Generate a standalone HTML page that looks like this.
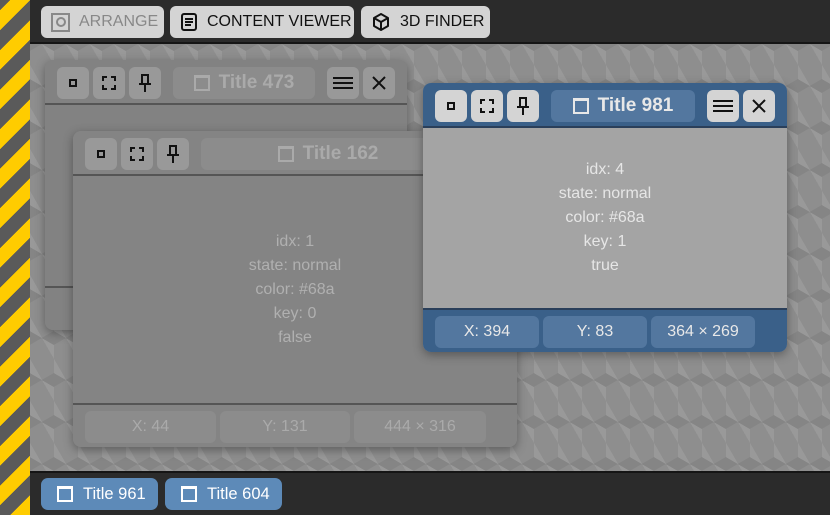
<!DOCTYPE html><html><head><style>
*{box-sizing:border-box;margin:0;padding:0}
body{width:830px;height:515px;overflow:hidden;position:relative;font-family:"Liberation Sans",sans-serif;background:#8c8c8c}
.stripe{position:absolute;left:0;top:0;width:30px;height:515px;background:repeating-linear-gradient(-45deg,#ffcc00 0 14px,#5a5a5a 14px 28px)}
.bg{position:absolute;left:30px;top:44px;right:0;bottom:44px;background-color:#8e8e8e;background-image:linear-gradient(30deg,#858585 12%,transparent 12.5%,transparent 87%,#858585 87.5%),linear-gradient(150deg,#858585 12%,transparent 12.5%,transparent 87%,#858585 87.5%),linear-gradient(60deg,#999 25%,transparent 25.5%,transparent 75%,#999 75%);background-size:24px 42px}
.top{position:absolute;left:30px;top:0;right:0;height:44px;background:#2b2b2b;border-bottom:2px solid #151515}
.bot{position:absolute;left:30px;bottom:0;right:0;height:44px;background:#2b2b2b;border-top:2px solid #151515}
.tb{position:absolute;top:6px;height:32px;background:#d4d4d4;border-radius:6px;font-size:16px;color:#111;display:flex;align-items:center;padding-left:10px;gap:9px;white-space:nowrap}
.win{position:absolute;border-radius:8px;box-shadow:0 3px 10px rgba(0,0,0,.35);overflow:hidden}
.hd{position:absolute;left:0;right:0;top:0;height:45px;border-bottom:2px solid #555}
.b{position:absolute;top:7px;width:32px;height:32px;border-radius:6px;display:flex;align-items:center;justify-content:center}
.title{position:absolute;top:7px;height:32px;border-radius:6px;display:flex;align-items:center;justify-content:center;gap:9px;font-weight:bold;font-size:19px;white-space:nowrap}
.body{position:absolute;left:0;right:0;top:45px;text-align:center;font-size:16px;line-height:24px}
.ft{position:absolute;left:0;right:0;bottom:0;height:44px;border-top:2px solid #555}
.p{position:absolute;top:6px;height:32px;border-radius:6px;display:flex;align-items:center;justify-content:center;font-size:16px}
.task{position:absolute;top:478px;height:32px;background:#5d8ab8;border-radius:7px;color:#fff;font-size:16.5px;display:flex;align-items:center;padding-left:16px;gap:10px;white-space:nowrap}
.sq{width:16px;height:16px;border:2px solid currentColor;border-top-width:3px}
</style></head><body>
<div class="stripe"></div><div class="bg"></div>
<div class="top">
<div class="tb" style="left:11px;width:123px;color:#888"><span style="width:19px;height:19px;border:2px solid #888;display:flex;align-items:center;justify-content:center"><span style="width:10px;height:10px;border:2px solid #888;border-radius:50%"></span></span>ARRANGE</div>
<div class="tb" style="left:140px;width:184px"><svg width="18" height="18" viewBox="0 0 18 18"><rect x="2" y="1" width="14" height="16" rx="2" fill="none" stroke="#111" stroke-width="2"/><path d="M5 6h8M5 9h8M5 12h6" stroke="#111" stroke-width="2"/></svg>CONTENT VIEWER</div>
<div class="tb" style="left:331px;width:129px"><svg width="20" height="20" viewBox="0 0 20 20"><path d="M10 2l7 4v8l-7 4-7-4V6z M3 6l7 4 7-4 M10 10v8" fill="none" stroke="#111" stroke-width="2" stroke-linejoin="round"/></svg>3D FINDER</div>
</div>
<div class="bot"></div>
<div class="task" style="left:41px;width:117px"><span class="sq"></span>Title 961</div>
<div class="task" style="left:165px;width:117px"><span class="sq"></span>Title 604</div>

<!-- win 473 -->
<div class="win" style="left:45px;top:60px;width:362px;height:270px;background:#828282">
<div class="hd" style="background:#828282"></div>
<div class="b" style="left:12px;background:#999"><span style="width:8px;height:8px;border:2px solid #111"></span></div>
<div class="b" style="left:48px;background:#999"><svg width="14" height="14"><path d="M1 5V1h4M9 1h4v4M13 9v4H9M5 13H1V9" fill="none" stroke="#111" stroke-width="2"/></svg></div>
<div class="b" style="left:84px;background:#999"><svg width="14" height="18"><path d="M3 1h8M4 1v8M10 1v8M1 10h12M7 10v8" fill="none" stroke="#111" stroke-width="2"/></svg></div>
<div class="title" style="left:128px;width:142px;background:#8c8c8c;color:#aaa"><span class="sq" style="color:#aaa"></span>Title 473</div>
<div class="b" style="left:282px;background:#999"><svg width="20" height="14"><path d="M0 2h20M0 7h20M0 12h20" stroke="#111" stroke-width="2"/></svg></div>
<div class="b" style="left:318px;background:#999"><svg width="16" height="16"><path d="M2 2l12 12M14 2L2 14" stroke="#111" stroke-width="2"/></svg></div>
<div class="ft" style="background:#828282"></div>
</div>

<!-- win 162 -->
<div class="win" style="left:73px;top:131px;width:444px;height:316px;background:#848484">
<div class="hd" style="background:#848484"></div>
<div class="b" style="left:12px;background:#999"><span style="width:8px;height:8px;border:2px solid #111"></span></div>
<div class="b" style="left:48px;background:#999"><svg width="14" height="14"><path d="M1 5V1h4M9 1h4v4M13 9v4H9M5 13H1V9" fill="none" stroke="#111" stroke-width="2"/></svg></div>
<div class="b" style="left:84px;background:#999"><svg width="14" height="18"><path d="M3 1h8M4 1v8M10 1v8M1 10h12M7 10v8" fill="none" stroke="#111" stroke-width="2"/></svg></div>
<div class="title" style="left:128px;width:254px;background:#8c8c8c;color:#aaa"><span class="sq" style="color:#aaa"></span>Title 162</div>
<div class="body" style="color:#b0b0b0;padding-top:54px">idx: 1<br>state: normal<br>color: #68a<br>key: 0<br>false</div>
<div class="ft" style="background:#848484">
<div class="p" style="left:12px;width:131px;background:#8c8c8c;color:#aaa">X: 44</div>
<div class="p" style="left:147px;width:130px;background:#8c8c8c;color:#aaa">Y: 131</div>
<div class="p" style="left:281px;width:132px;background:#8c8c8c;color:#aaa">444 × 316</div>
</div>
</div>

<!-- win 981 -->
<div class="win" style="left:423px;top:83px;width:364px;height:269px;background:#a4a4a4">
<div class="hd" style="background:#3a6089;border-bottom-color:#2a3f5a"></div>
<div class="b" style="left:12px;background:#d4d4d4"><span style="width:8px;height:8px;border:2px solid #111"></span></div>
<div class="b" style="left:48px;background:#d4d4d4"><svg width="14" height="14"><path d="M1 5V1h4M9 1h4v4M13 9v4H9M5 13H1V9" fill="none" stroke="#111" stroke-width="2"/></svg></div>
<div class="b" style="left:84px;background:#d4d4d4"><svg width="14" height="18"><path d="M3 1h8M4 1v8M10 1v8M1 10h12M7 10v8" fill="none" stroke="#111" stroke-width="2"/></svg></div>
<div class="title" style="left:128px;width:144px;background:#53779f;color:#e8e8e8"><span class="sq" style="color:#e8e8e8"></span>Title 981</div>
<div class="b" style="left:284px;background:#d4d4d4"><svg width="20" height="14"><path d="M0 2h20M0 7h20M0 12h20" stroke="#111" stroke-width="2"/></svg></div>
<div class="b" style="left:320px;background:#d4d4d4"><svg width="16" height="16"><path d="M2 2l12 12M14 2L2 14" stroke="#111" stroke-width="2"/></svg></div>
<div class="body" style="color:#e6e6e6;padding-top:30px">idx: 4<br>state: normal<br>color: #68a<br>key: 1<br>true</div>
<div class="ft" style="background:#3a6089;border-top-color:#2a3f5a">
<div class="p" style="left:12px;width:104px;background:#53779f;color:#e8e8e8">X: 394</div>
<div class="p" style="left:120px;width:104px;background:#53779f;color:#e8e8e8">Y: 83</div>
<div class="p" style="left:228px;width:104px;background:#53779f;color:#e8e8e8">364 × 269</div>
</div>
</div>
</body></html>
